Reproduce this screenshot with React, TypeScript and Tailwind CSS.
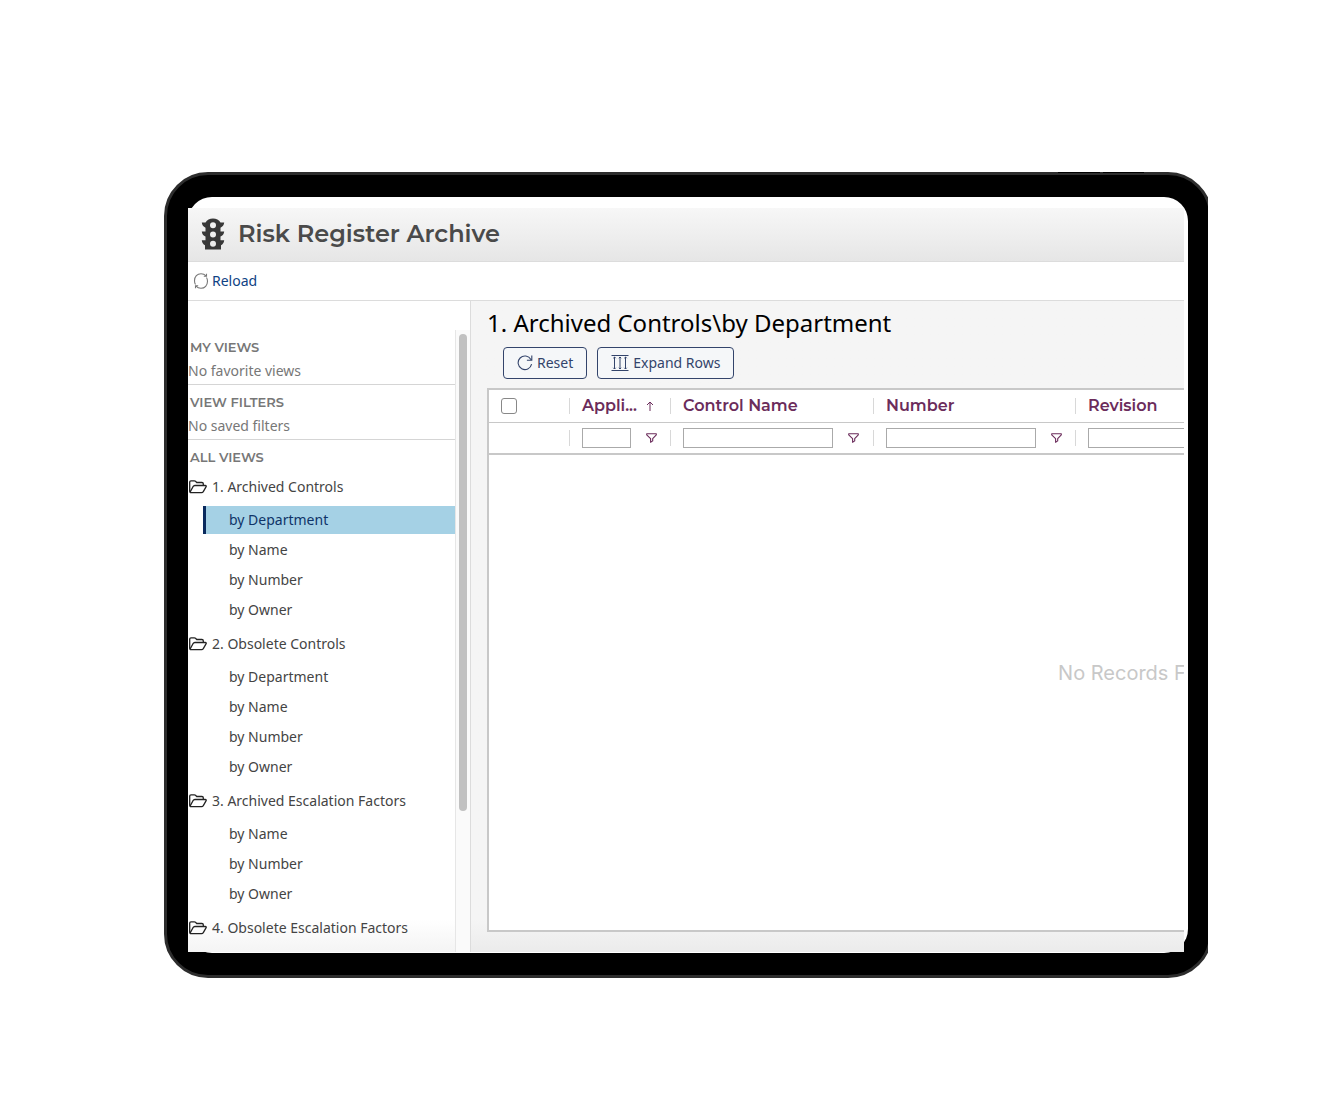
const groups = [
  { name: "1. Archived Controls", views: ["by Department", "by Name", "by Number", "by Owner"] },
  { name: "2. Obsolete Controls", views: ["by Department", "by Name", "by Number", "by Owner"] },
  { name: "3. Archived Escalation Factors", views: ["by Name", "by Number", "by Owner"] },
  { name: "4. Obsolete Escalation Factors", views: [] },
];

const columns = [
  { label: "Appli...", name: "Application", sorted: true, width: "w-[101px]", input: "w-[49px]" },
  { label: "Control Name", name: "Control Name", sorted: false, width: "w-[203px]", input: "w-[150px]" },
  { label: "Number", name: "Number", sorted: false, width: "w-[202px]", input: "w-[150px]" },
  { label: "Revision", name: "Revision", sorted: false, width: "", input: "w-[150px]" },
];

function TrafficLightIcon() {
  return (
    <svg className="h-8 w-6 shrink-0" viewBox="0 0 24 32" fill="#383838" aria-hidden="true">
      <path
        fillRule="evenodd"
        d="M4.500 4.500C6 1.800 8.700.6 12 .6s6 1.200 7.500 3.900h3.700c-.2 2.700-1.600 4.200-3.700 5.200v3.700h3.700c-.2 2.700-1.600 4.200-3.700 5.200v3.700h3.700c-.2 2.600-1.400 4-3.200 5v4.200H4v-4.200c-1.800-1-3-2.400-3.200-5h3.700v-3.700C2.400 17.600 1 16.100.8 13.400h3.700V9.700C2.400 8.700 1 7.200.8 4.500zM12 4.300a3 3 0 1 0 0 6 3 3 0 0 0 0-6zm0 9.200a3 3 0 1 0 0 6 3 3 0 0 0 0-6zm0 9.200a3 3 0 1 0 0 6 3 3 0 0 0 0-6z"
      />
    </svg>
  );
}

function ReloadIcon() {
  return (
    <svg className="h-4 w-4 shrink-0" viewBox="0 0 16 16" fill="none" stroke="#777" strokeWidth="1.100" aria-hidden="true">
      <path d="M3 13.200C4.300 14.600 6 15.300 8 15.300c3.800 0 6.500-3 6.500-7 0-1.500-.3-2.700-1-3.800M13 2.800C11.700 1.400 10 .7 8 .7 4.200.7 1.500 3.700 1.500 7.700c0 1.500.3 2.700 1 3.800" />
      <path d="M10.800 3.300h2.700V.8M5.200 12.700H2.500v2.500" />
    </svg>
  );
}

function FolderIcon() {
  return (
    <svg className="h-[14px] w-[18px] shrink-0" viewBox="0 0 18 14" fill="none" stroke="#222" strokeWidth="1.300" strokeLinejoin="round" aria-hidden="true">
      <path d="M1.600 12.300C.9 12 .7 11.500.7 10.900V2.100C.7 1.300 1.200.8 2 .8h3.300c.5 0 .9.2 1.200.5l1.200 1.200h5.200c.9 0 1.400.5 1.400 1.300v1.600" />
      <path d="M1.300 11.600 4 6.700c.5-.8 1-1.200 1.800-1.200h10.400c.9 0 1.300.7.8 1.400l-2.700 4.700c-.5.800-.9 1.100-1.700 1.100H2c-.7 0-1-.5-.7-1.100z" />
    </svg>
  );
}

function ResetIcon() {
  return (
    <svg className="h-4 w-4 shrink-0" viewBox="0 0 16 16" fill="none" stroke="currentColor" strokeWidth="1.100" aria-hidden="true">
      <path d="M14.600 9.200A6.800 6.800 0 1 1 13.900 4.500M14.800.6v4.700h-4.900" />
    </svg>
  );
}

function ExpandIcon() {
  return (
    <svg className="h-4 w-[18px] shrink-0" viewBox="0 0 18 16" fill="none" stroke="currentColor" strokeWidth="1" aria-hidden="true">
      <path d="M.5.500h17M.5 15.500h17M3.500 2v12M9 2v12M14.500 2v12" />
      <path d="M2.300 3.200 3.500 2l1.200 1.200M7.800 3.200 9 2l1.200 1.200M13.300 3.200 14.500 2l1.200 1.200M2.300 12.800 3.500 14l1.200-1.200M7.800 12.800 9 14l1.200-1.200M13.300 12.800l1.200 1.200 1.200-1.200" />
    </svg>
  );
}

function FilterIcon() {
  return (
    <svg className="h-[10px] w-[11px]" viewBox="0 0 11 10" fill="none" stroke="#6b2c5b" strokeWidth="1.100" strokeLinejoin="round" aria-hidden="true">
      <path d="M.7.700h9.600v1.100L6.700 5.700v2.200L4.600 9.300V5.700L.7 1.800z" />
    </svg>
  );
}

function Sidebar() {
  return (
    <aside className="flex w-[283px] shrink-0 border-r border-[#dcdcdc] bg-linear-to-t from-[#f4f4f4] to-white to-5% pt-[29px]">
      <nav className="min-w-0 grow pb-[5px] text-sm text-[#444]">
        <section className="border-b border-[#d5d5d5] pt-[5px] pb-px text-[#777]">
          <h2 className="pl-0.5 font-[Montserrat,Inter,sans-serif] text-[13px] leading-6 font-semibold">MY VIEWS</h2>
          <p className="leading-6">No favorite views</p>
        </section>
        <section className="border-b border-[#d5d5d5] pt-[5px] pb-px text-[#777]">
          <h2 className="pl-0.5 font-[Montserrat,Inter,sans-serif] text-[13px] leading-6 font-semibold">VIEW FILTERS</h2>
          <p className="leading-6">No saved filters</p>
        </section>
        <h2 className="pt-[5px] pl-0.5 font-[Montserrat,Inter,sans-serif] text-[13px] leading-6 font-semibold text-[#777]">ALL VIEWS</h2>
        {groups.map((group, g) => (
          <div key={group.name} className="pb-px">
            <a href="#" className="flex h-9 items-center gap-[5px] pl-px">
              <FolderIcon />
              {group.name}
            </a>
            <ul>
              {group.views.map((view, i) => (
                <li key={view} className="py-px pl-[15px]">
                  <a
                    href="#"
                    className={
                      g === 0 && i === 0
                        ? "block border-l-3 border-[#0a2a5e] bg-[#a5d1e5] pl-[23px] leading-7 text-[#0f3468]"
                        : "block pl-[26px] leading-7"
                    }
                  >
                    {view}
                  </a>
                </li>
              ))}
            </ul>
          </div>
        ))}
      </nav>
      <div className="flex w-[15px] shrink-0 flex-col items-center border-l border-[#e6e6e6] bg-[#fafafa] pt-1 pb-[141px]">
        <div className="w-2 grow rounded-full bg-[#c1c1c1]" />
      </div>
    </aside>
  );
}

function Grid() {
  return (
    <div className="flex w-[1317px] grow flex-col border-2 border-[#c8c8c8] bg-white">
      <table className="w-full table-fixed border-collapse text-left">
        <thead>
          <tr className="h-8 border-b border-[#c8c8c8]">
            <th className="w-20 p-0 pl-3 align-middle">
              <input type="checkbox" aria-label="Select all" className="block h-4 w-4 appearance-none rounded-[3px] border border-[#888] bg-white" />
            </th>
            {columns.map((col) => (
              <th key={col.name} className={`${col.width} p-0`}>
                <div className="flex h-4 items-center border-l border-[#d8d8d8] pl-3 font-[Montserrat,Inter,sans-serif] text-base font-semibold text-[#6b2c5b]">
                  {col.label}
                  {col.sorted && (
                    <svg className="ml-[9px] h-[10px] w-2" viewBox="0 0 8 10" fill="none" stroke="currentColor" aria-hidden="true">
                      <path d="M4 10V1M1 4l3-3 3 3" />
                    </svg>
                  )}
                </div>
              </th>
            ))}
          </tr>
          <tr className="h-8 border-b-2 border-[#c8c8c8]">
            <td />
            {columns.map((col) => (
              <td key={col.name} className="p-0">
                <div className="flex h-4 items-center border-l border-[#d8d8d8] pl-3">
                  <input type="text" aria-label={`Filter ${col.name}`} className={`${col.input} h-5 shrink-0 border border-[#aaa] bg-white px-1 text-sm`} />
                  <button type="button" aria-label={`Filter options for ${col.name}`} className="ml-[15px] shrink-0">
                    <FilterIcon />
                  </button>
                </div>
              </td>
            ))}
          </tr>
        </thead>
      </table>
      <div className="flex grow items-center justify-center pb-10">
        <p className="font-[Inter,sans-serif] text-xl text-[#c8c8c8]">No Records Found</p>
      </div>
    </div>
  );
}

export default function App() {
  return (
    <div className="overflow-hidden bg-white pt-[172px] pr-[136px] pb-[142px] pl-[164px] font-['Noto_Sans',sans-serif]">
      <div className="overflow-hidden">
        <div className="relative -mr-1 rounded-[44px] border-3 border-[#2d2d2d] bg-black px-[21px] py-[22px]">
          <div className="absolute -top-[3px] right-[65px] flex gap-[3px]">
            <span className="h-px w-[42px] bg-black" />
            <span className="h-px w-[41px] bg-black" />
          </div>
          <div className="rounded-3xl bg-white pt-[11px] pr-1 pb-px">
            <div className="flex flex-col overflow-hidden bg-white">
              <header className="flex h-[54px] items-center gap-[13px] border-b border-[#dcdcdc] bg-linear-to-b from-[#f7f7f7] to-[#e6e6e6] px-[13px] pb-0.5">
                <TrafficLightIcon />
                <h1 className="font-[Montserrat,Inter,sans-serif] text-2xl font-semibold text-[#4a4a4a]">Risk Register Archive</h1>
              </header>
              <div className="flex h-[39px] items-center border-b border-[#dcdcdc] px-[5px]">
                <button type="button" className="flex items-center gap-[3px] text-sm text-[#0f4284]">
                  <ReloadIcon />
                  Reload
                </button>
              </div>
              <div className="flex">
                <Sidebar />
                <main className="flex min-w-0 grow flex-col overflow-hidden bg-linear-to-t from-[#ebebeb] to-[#f5f5f5] to-5% pb-5 pl-4">
                  <h2 className="pt-1.5 text-2xl leading-8 whitespace-nowrap text-black">1. Archived Controls\by Department</h2>
                  <div className="flex gap-2.5 px-4 pt-2 pb-[9px] text-sm text-[#33446b]">
                    <button type="button" className="flex h-8 items-center gap-1 rounded border border-[#33446b] bg-[#f5f7f9] px-[13px]">
                      <ResetIcon />
                      Reset
                    </button>
                    <button type="button" className="flex h-8 items-center gap-1 rounded border border-[#33446b] bg-[#f5f7f9] px-[13px]">
                      <ExpandIcon />
                      Expand Rows
                    </button>
                  </div>
                  <Grid />
                </main>
              </div>
            </div>
          </div>
        </div>
      </div>
    </div>
  );
}
